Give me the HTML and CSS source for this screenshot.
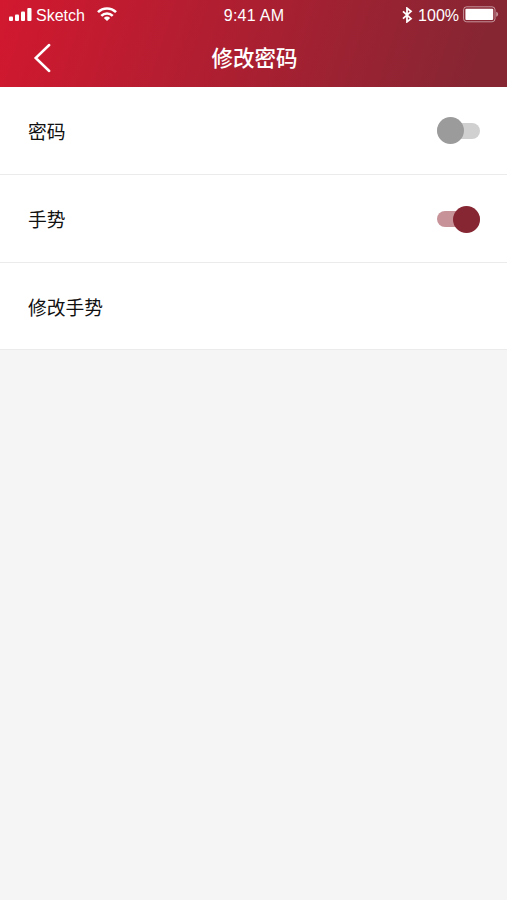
FILE: index.html
```
<!DOCTYPE html>
<html lang="zh-CN">
<head>
    <meta charset="UTF-8">
    <meta name="viewport" content="width=device-width, initial-scale=1.0">
    <title>修改密码</title>
    <link rel="stylesheet" href="styles.css">
</head>
<body>
<header class="header">
    <!-- 状态栏 -->
    <div class="status-bar">
        <div class="status-left">
            <svg class="signal" width="24" height="14" viewBox="0 0 24 14" fill="#fff">
                <rect x="0" y="8.5" width="4" height="4.5" rx="1"/>
                <rect x="6" y="6.5" width="4" height="6.5" rx="1"/>
                <rect x="12" y="3.5" width="4" height="9.5" rx="1"/>
                <rect x="18.3" y="0" width="4.2" height="13" rx="1"/>
            </svg>
            <span class="carrier">Sketch</span>
            <svg class="wifi" width="20" height="14" viewBox="0 0 20 14">
                <g fill="none" stroke="#fff" stroke-width="2.6">
                    <path d="M1 5.2a12.7 12.7 0 0 1 18 0"/>
                    <path d="M4.3 8.8a8.1 8.1 0 0 1 11.4 0"/>
                </g>
                <path d="M6.8 10.9a4.8 4.8 0 0 1 6.4 0L10 14z" fill="#fff"/>
            </svg>
        </div>
        <span class="time">9:41 AM</span>
        <div class="status-right">
            <svg class="bluetooth" width="11" height="16" viewBox="0 0 11 16">
                <path d="M1 4.3l8 7.3-4 3.2V1.2l4 3.2-8 7.3" fill="none" stroke="#fff" stroke-width="1.8"/>
            </svg>
            <span class="percent">100%</span>
            <svg class="battery" width="36" height="17" viewBox="0 0 36 17">
                <rect x="0.6" y="0.8" width="31.4" height="15" rx="3" fill="none" stroke="#fff" stroke-opacity="0.5"/>
                <rect x="2.4" y="2.7" width="27.8" height="11.2" rx="1" fill="#fff"/>
                <path d="M33.2 5.8c2.6 1 2.6 4 0 5z" fill="#fff" fill-opacity="0.5"/>
            </svg>
        </div>
    </div>
    <!-- 导航栏 -->
    <div class="nav-bar">
        <a class="back" href="#" aria-label="返回">
            <svg width="18" height="30" viewBox="0 0 18 30">
                <path d="M16.2 2L2.7 15l13.5 13" fill="none" stroke="#fff" stroke-width="2.5" stroke-linecap="round"/>
            </svg>
        </a>
        <h1>修改密码</h1>
    </div>
</header>
<ul class="settings">
    <li>
        <span>密码</span>
        <span class="switch"></span>
    </li>
    <li>
        <span>手势</span>
        <span class="switch on"></span>
    </li>
    <li>
        <span>修改手势</span>
    </li>
</ul>
</body>
</html>
```
FILE: styles.css
```
* {
    box-sizing: border-box;
}

body {
    margin: 0;
    min-height: 100vh;
    background-color: #f5f5f5;
    color: #111;
    font-family: "Liberation Sans", "Noto Sans CJK SC", sans-serif;
}

.header {
    height: 87px;
    background: linear-gradient(108deg, #d2182f 0%, #862633 94%);
    color: #fff;
}

/* 状态栏 */
.status-bar {
    display: grid;
    grid-template-columns: 1fr auto 1fr;
    align-items: center;
    height: 30px;
    padding: 0 8px 0 9px;
    font-size: 16px;
    line-height: 30px;
}

.status-bar span {
    padding-top: 2px;
    line-height: 28px;
}

.status-bar svg {
    display: block;
}

.status-left,
.status-right {
    display: flex;
    align-items: center;
}

.status-right {
    justify-content: flex-end;
}

.carrier {
    margin-left: 3px;
    margin-right: 12px;
}

.wifi {
    margin-top: -2px;
}

.time {
    letter-spacing: 0.25px;
}

.percent {
    margin: 0 4px 0 5px;
}

.battery {
    margin-top: -1px;
}

/* 导航栏 */
.nav-bar {
    display: grid;
    grid-template-columns: 60px 1fr 58px;
    align-items: center;
    height: 56px;
}

.back {
    padding-left: 33px;
}

.back svg {
    display: block;
}

h1 {
    margin: 0;
    padding-top: 1px;
    font-size: 21.5px;
    font-weight: 500;
    line-height: 30px;
    text-align: center;
}

/* 设置列表 */
.settings {
    margin: 0;
    padding: 0;
    list-style: none;
    background-color: #fff;
}

.settings li {
    display: flex;
    align-items: center;
    justify-content: space-between;
    height: 88px;
    padding: 0 27px 0 28px;
    border-bottom: 1px solid #ebebeb;
    font-size: 18.75px;
}

.settings li:last-child {
    height: 87px;
}

/* 开关 */
.switch {
    display: flex;
    align-items: center;
    width: 43px;
    height: 16px;
    border-radius: 8px;
    background-color: #d0d0d0;
}

.switch::before {
    content: "";
    width: 27px;
    height: 27px;
    border-radius: 50%;
    background-color: #9b9b9b;
}

.switch.on {
    justify-content: flex-end;
    margin-top: 1px;
    background-color: #c79399;
}

.switch.on::before {
    background-color: #862633;
}
```
